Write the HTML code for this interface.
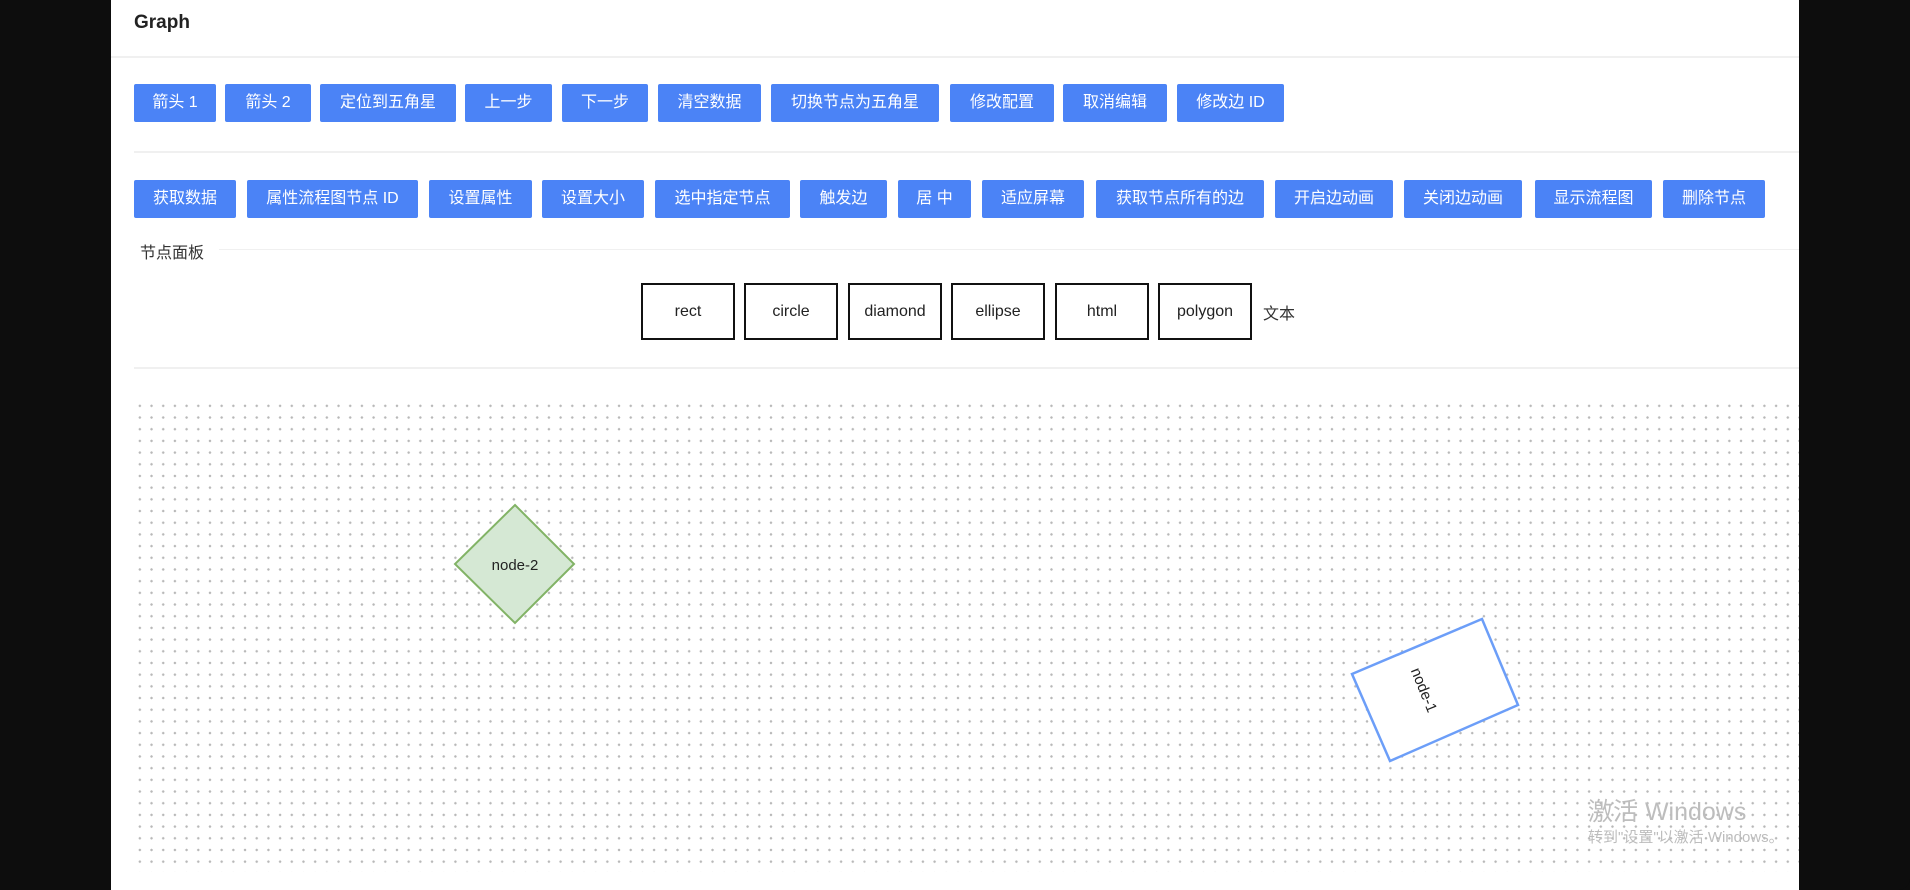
<!DOCTYPE html>
<html><head><meta charset="utf-8"><style>
*{margin:0;padding:0;box-sizing:border-box}
body{width:1910px;height:890px;background:#0d0d0d;position:relative;overflow:hidden;font-family:"Liberation Sans","Noto Sans CJK SC",sans-serif}
#panel{position:absolute;left:111px;top:0;width:1688px;height:890px;background:#fff}
.t{position:absolute;left:134px;top:12px;font-size:19px;font-weight:bold;color:#222}
.hr{position:absolute;height:2px;background:#f0f0f0}
.b{position:absolute;height:38px;background:#4b83f6;color:#fff;font-size:16px;line-height:38px;text-align:center;border-radius:2px;white-space:nowrap}
.s{position:absolute;top:283px;height:57px;width:94px;border:2px solid #111;font-size:16px;line-height:53px;text-align:center;color:#222}
#grid{position:absolute;left:134px;top:400px;width:1665px;height:472px;background-image:radial-gradient(circle,#b8b8b8 1.1px,transparent 1.4px);background-size:11.7px 11.7px}
</style></head><body>
<div id="panel"></div>
<div class="t">Graph</div>
<div class="hr" style="left:111px;top:56px;width:1688px"></div>
<div class="b" style="left:134px;top:84px;width:82px">箭头 1</div>
<div class="b" style="left:225px;top:84px;width:86px">箭头 2</div>
<div class="b" style="left:320px;top:84px;width:136px">定位到五角星</div>
<div class="b" style="left:465px;top:84px;width:87px">上一步</div>
<div class="b" style="left:562px;top:84px;width:86px">下一步</div>
<div class="b" style="left:658px;top:84px;width:103px">清空数据</div>
<div class="b" style="left:771px;top:84px;width:168px">切换节点为五角星</div>
<div class="b" style="left:950px;top:84px;width:104px">修改配置</div>
<div class="b" style="left:1063px;top:84px;width:104px">取消编辑</div>
<div class="b" style="left:1177px;top:84px;width:107px">修改边 ID</div>
<div class="hr" style="left:134px;top:151px;width:1665px"></div>
<div class="b" style="left:134px;top:180px;width:102px">获取数据</div>
<div class="b" style="left:247px;top:180px;width:171px">属性流程图节点 ID</div>
<div class="b" style="left:429px;top:180px;width:103px">设置属性</div>
<div class="b" style="left:542px;top:180px;width:102px">设置大小</div>
<div class="b" style="left:655px;top:180px;width:135px">选中指定节点</div>
<div class="b" style="left:800px;top:180px;width:87px">触发边</div>
<div class="b" style="left:898px;top:180px;width:73px">居 中</div>
<div class="b" style="left:982px;top:180px;width:102px">适应屏幕</div>
<div class="b" style="left:1096px;top:180px;width:168px">获取节点所有的边</div>
<div class="b" style="left:1275px;top:180px;width:118px">开启边动画</div>
<div class="b" style="left:1404px;top:180px;width:118px">关闭边动画</div>
<div class="b" style="left:1535px;top:180px;width:117px">显示流程图</div>
<div class="b" style="left:1663px;top:180px;width:102px">删除节点</div>
<div style="position:absolute;left:140px;top:239px;font-size:16px;color:#333">节点面板</div>
<div class="hr" style="left:219px;top:249px;width:1580px;height:1px"></div>
<div class="s" style="left:641px">rect</div>
<div class="s" style="left:744px">circle</div>
<div class="s" style="left:848px">diamond</div>
<div class="s" style="left:951px">ellipse</div>
<div class="s" style="left:1055px">html</div>
<div class="s" style="left:1158px">polygon</div>
<div style="position:absolute;left:1263px;top:300px;font-size:16px;color:#333">文本</div>
<div class="hr" style="left:134px;top:367px;width:1665px"></div>
<div id="grid"></div>
<svg style="position:absolute;left:0;top:0" width="1910" height="890">
<polygon points="515,505 574,564 515,623 455,564" fill="#d5e8d4" stroke="#82b366" stroke-width="2"/>
<text x="515" y="570" font-size="15" text-anchor="middle" font-family="Liberation Sans" fill="#222">node-2</text>
<polygon points="1352,674 1482,619 1518,705 1390,761" fill="#fff" stroke="#6c9ef8" stroke-width="2.5"/>
<text x="0" y="5" font-size="15" text-anchor="middle" font-family="Liberation Sans" fill="#222" transform="translate(1424,690) rotate(68)">node-1</text>
</svg>
<div style="position:absolute;left:1799px;top:0;width:111px;height:890px;background:#0d0d0d;border-bottom-right-radius:12px"></div>
<div style="position:absolute;left:1588px;top:792px;font-size:25px;color:#bdbdbd;white-space:nowrap">激活 Windows</div>
<div style="position:absolute;left:1588px;top:826px;font-size:15px;color:#bdbdbd;white-space:nowrap">转到"设置"以激活 Windows。</div>
</body></html>
